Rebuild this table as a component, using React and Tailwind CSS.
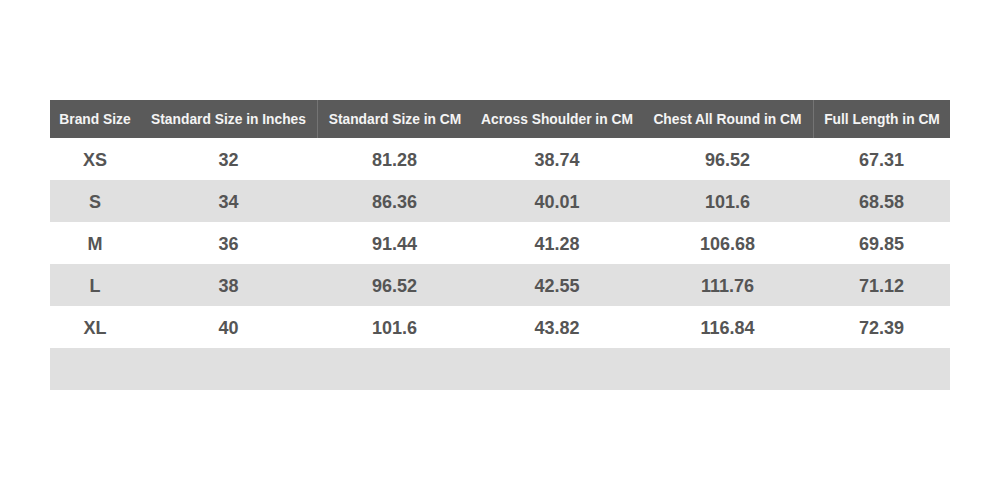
import React from "react";

const headers = [
  "Brand Size",
  "Standard Size in Inches",
  "Standard Size in CM",
  "Across Shoulder in CM",
  "Chest All Round in CM",
  "Full Length in CM",
];

const rows = [
  ["XS", "32", "81.28", "38.74", "96.52", "67.31"],
  ["S", "34", "86.36", "40.01", "101.6", "68.58"],
  ["M", "36", "91.44", "41.28", "106.68", "69.85"],
  ["L", "38", "96.52", "42.55", "111.76", "71.12"],
  ["XL", "40", "101.6", "43.82", "116.84", "72.39"],
  ["", "", "", "", "", ""],
];

const dividerAfter = [false, true, false, false, true, false];

export default function App() {
  return (
    <div
      className="w-[1000px] h-[490px] bg-white pt-[100px] px-[50px]"
      style={{ fontFamily: '"Liberation Sans", Arial, sans-serif' }}
    >
      <div className="w-[900px]">
        <div className="grid grid-cols-[90px_177px_155px_170px_171px_137px] h-[38px] bg-[#5a5a5a]">
          {headers.map((h, i) => (
            <div
              key={i}
              className={
                "flex items-center justify-center pt-[3px] text-[13.8px] font-bold text-[#f4f4f4] whitespace-nowrap " +
                (i > 0 && dividerAfter[i - 1] ? "border-l border-[#747474]" : "")
              }
            >
              {h}
            </div>
          ))}
        </div>
        {rows.map((r, ri) => (
          <div
            key={ri}
            className={
              "grid grid-cols-[90px_177px_155px_170px_171px_137px] h-[42px] " +
              (ri % 2 === 1 ? "bg-[#e0e0e0]" : "bg-white")
            }
          >
            {r.map((c, ci) => (
              <div
                key={ci}
                className="flex items-center justify-center pt-[2px] text-[18px] font-bold text-[#555555]"
              >
                {c}
              </div>
            ))}
          </div>
        ))}
      </div>
    </div>
  );
}
